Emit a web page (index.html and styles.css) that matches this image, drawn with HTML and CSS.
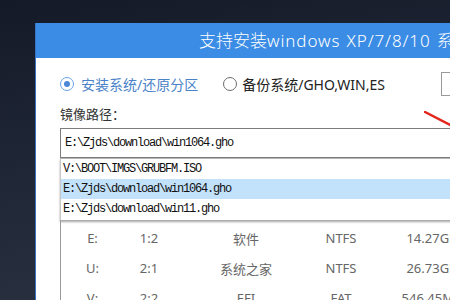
FILE: index.html
```html
<!DOCTYPE html>
<html lang="zh-CN">
<head>
    <meta charset="UTF-8">
    <meta name="viewport" content="width=device-width, initial-scale=1.0">
    <title>系统安装</title>
    <link rel="stylesheet" href="styles.css">
</head>
<body>
    <div class="window">
        <div class="titlebar">支持安装<span class="title-latin">windows XP/7/8/10 </span>系统</div>
        <div class="content">
            <div class="modes">
                <label class="mode active"><span class="radio"></span>安装系统/还原分区</label>
                <label class="mode"><span class="radio"></span>备份系统/GHO,WIN,ES</label>
                <div class="side-box"></div>
            </div>

            <div class="field-label">镜像路径：</div>

            <div class="combo">
                <div class="combo-input">E:\Zjds\download\win1064.gho</div>
                <div class="combo-list">
                    <div class="combo-item">V:\BOOT\IMGS\GRUBFM.ISO</div>
                    <div class="combo-item selected">E:\Zjds\download\win1064.gho</div>
                    <div class="combo-item">E:\Zjds\download\win11.gho</div>
                </div>
            </div>

            <div class="partitions">
                <div class="part-row">
                    <span>E:</span><span>1:2</span><span>软件</span><span>NTFS</span><span>14.27GB</span>
                </div>
                <div class="part-row">
                    <span>U:</span><span>2:1</span><span>系统之家</span><span>NTFS</span><span>26.73GB</span>
                </div>
                <div class="part-row">
                    <span>V:</span><span>2:2</span><span>EFI</span><span>FAT</span><span>546.45MB</span>
                </div>
            </div>

            <!-- red annotation arrow -->
            <svg class="arrow" width="40" height="24" viewBox="0 0 40 24">
                <path d="M1 1 L40 21" stroke="#e3261c" stroke-width="2.4" stroke-linecap="round" fill="none"/>
            </svg>
        </div>
    </div>
</body>
</html>
```

FILE: styles.css
```css
* {
    margin: 0;
    padding: 0;
    box-sizing: border-box;
}

html, body {
    width: 450px;
    height: 300px;
    overflow: hidden;
}

body {
    font-family: "Noto Sans", "Noto Sans CJK SC", sans-serif;
    background: linear-gradient(170deg, #141a27 0%, #1f2636 45%, #2c3444 100%);
}

.window {
    margin: 23px 0 0 35px;
    width: 540px;
    height: 300px;
    background-color: #fff;
    border-left: 1px solid #3a72c0;
}

.titlebar {
    height: 35px;
    line-height: 35px;
    padding-left: 163px;
    background-color: #3b8ce4;
    color: #fff;
    font-family: "Noto Sans", "Noto Sans CJK SC", sans-serif;
    font-size: 17px;
    font-weight: 300;
    white-space: nowrap;
}

.title-latin {
    letter-spacing: 0.9px;
    word-spacing: 1px;
}

.content {
    position: relative;
    padding-left: 24px;
}

.modes {
    display: flex;
    align-items: center;
    height: 24px;
    margin-top: 14px;
    font-family: "Noto Sans", "Noto Sans CJK SC", sans-serif;
    font-size: 14px;
    color: #222;
    white-space: nowrap;
}

.mode {
    display: flex;
    align-items: center;
    gap: 7px;
}

.mode + .mode {
    margin-left: 25px;
    gap: 5px;
}

.mode.active {
    color: #4a82c8;
}

.radio {
    width: 14px;
    height: 14px;
    border-radius: 50%;
    border: 1px solid #6f6f6f;
    display: flex;
    align-items: center;
    justify-content: center;
}

.mode.active .radio {
    border-color: #6aa3e3;
}

.mode.active .radio::after {
    content: "";
    width: 6px;
    height: 6px;
    border-radius: 50%;
    background-color: #4b87d6;
}

.side-box {
    margin-left: 56px;
    width: 60px;
    height: 24px;
    border: 1px solid #9a9a9a;
    flex-shrink: 0;
}

.field-label {
    margin-top: 9px;
    font-family: "Noto Sans CJK SC", sans-serif;
    font-size: 13px;
    line-height: 18px;
    color: #333;
}

.combo {
    margin-top: 5px;
    width: 480px;
    font-family: "Liberation Mono", monospace;
    font-size: 12px;
    letter-spacing: -1.2px;
    color: #111;
}

.combo-input {
    height: 30px;
    line-height: 28px;
    padding-left: 4px;
    border: 1px solid #7c7c7c;
}

.combo-list {
    border-left: 1px solid #c8c8c8;
    border-top: 1px solid #b4b4b4;
    box-shadow: 0 2px 2px rgba(0, 0, 0, 0.35);
    height: 62px;
}

.combo-item {
    height: 20px;
    line-height: 20px;
    padding-left: 2px;
}

.combo-item.selected {
    background-color: #c2e1fb;
}

.partitions {
    width: 480px;
    padding-top: 3px;
    border-left: 1px solid #9a9a9a;
    font-family: "Noto Sans", "Noto Sans CJK SC", sans-serif;
    font-size: 13px;
    color: #666;
}

.part-row {
    display: grid;
    grid-template-columns: 63px 50px 144px 46px 136px;
    height: 30px;
    align-items: center;
    text-align: center;
    white-space: nowrap;
}

.arrow {
    position: absolute;
    left: 388px;
    top: 39px;
}
```
